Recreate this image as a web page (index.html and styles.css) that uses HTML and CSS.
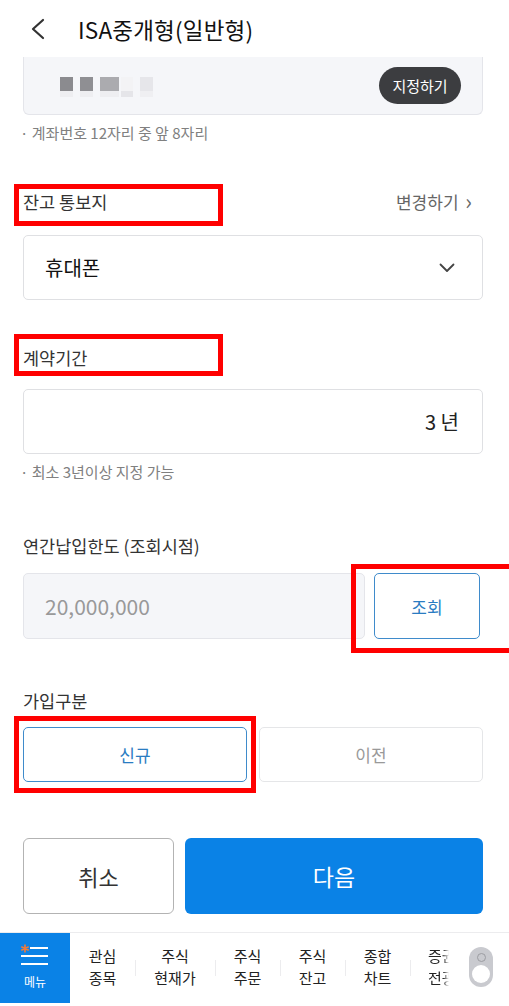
FILE: index.html
```html
<!DOCTYPE html>
<html>
<head>
<meta charset="utf-8">
<link rel="stylesheet" href="styles.css">
</head>
<body>

<div class="page">
  <div class="top-bar">
    <svg class="back-icon" width="16" height="22" viewBox="0 0 16 22">
      <path d="M13 2 L3 11 L13 20" fill="none" stroke="#333" stroke-width="2.2" stroke-linecap="round" stroke-linejoin="round"/>
    </svg>
    <div class="top-title">ISA중개형(일반형)</div>
  </div>

  <div class="account-box">
    <div class="account-blur">
      <span class="blur b1"></span>
      <span class="blur b2"></span>
      <span class="blur b3"></span>
      <span class="blur b4"></span>
      <span class="blur b5"></span>
    </div>
    <button class="pill-btn">지정하기</button>
  </div>
  <p class="note note-account">· 계좌번호 12자리 중 앞 8자리</p>

  <!-- 잔고 통보지 -->
  <div class="field-head head-notice">
    <span class="field-label">잔고 통보지</span>
    <span class="field-link">변경하기 <span class="link-arrow">&#8250;</span></span>
    <span class="mark mark-notice"></span>
  </div>
  <div class="input-box select-box">
    <span class="select-value">휴대폰</span>
    <svg width="16" height="10" viewBox="0 0 16 10">
      <path d="M1.5 1.5 L8 8 L14.5 1.5" fill="none" stroke="#444" stroke-width="1.8" stroke-linecap="round" stroke-linejoin="round"/>
    </svg>
  </div>

  <!-- 계약기간 -->
  <div class="field-head head-period">
    <span class="field-label">계약기간</span>
    <span class="mark mark-period"></span>
  </div>
  <div class="input-box period-box">
    <span class="period-value">3 년</span>
  </div>
  <p class="note note-period">· 최소 3년이상 지정 가능</p>

  <!-- 연간납입한도 -->
  <div class="field-head head-limit">
    <span class="field-label">연간납입한도 (조회시점)</span>
  </div>
  <div class="limit-row">
    <div class="limit-input">20,000,000</div>
    <button class="outline-btn query-btn">조회</button>
    <span class="mark mark-query"></span>
  </div>

  <!-- 가입구분 -->
  <div class="field-head head-type">
    <span class="field-label">가입구분</span>
  </div>
  <div class="type-row">
    <button class="outline-btn type-btn active">신규</button>
    <button class="type-btn">이전</button>
    <span class="mark mark-type"></span>
  </div>

  <div class="action-row">
    <button class="cancel-btn">취소</button>
    <button class="next-btn">다음</button>
  </div>

  <div class="bottom-nav">
    <div class="menu-tab">
      <svg width="28" height="24" viewBox="0 0 28 24">
        <path d="M4 1 L4 8 M0.8 3 L7.2 6 M0.8 6 L7.2 3" stroke="#f07a3a" stroke-width="1.6" stroke-linecap="round"/>
        <path d="M10 4 H26 M1 12 H26 M1 20 H26" stroke="#fff" stroke-width="2" stroke-linecap="square"/>
      </svg>
      <span class="menu-text">메뉴</span>
    </div>
    <div class="nav-scroll">
      <div class="nav-item"><span>관심</span><span>종목</span></div>
      <div class="nav-item wide"><span>주식</span><span>현재가</span></div>
      <div class="nav-item"><span>주식</span><span>주문</span></div>
      <div class="nav-item"><span>주식</span><span>잔고</span></div>
      <div class="nav-item"><span>종합</span><span>차트</span></div>
      <div class="nav-item last"><span>증권</span><span>전광판</span></div>
    </div>
    <div class="nav-toggle">
      <span class="toggle-ring"></span>
      <span class="toggle-dot"></span>
    </div>
  </div>
</div>

</body>
</html>
```

FILE: styles.css
```css
* {
  box-sizing: border-box;
}

body {
  margin: 0;
  background: #fff;
  font-family: "Noto Sans CJK KR", "Noto Sans", sans-serif;
  color: #222;
  overflow: hidden;
}

button {
  font-family: inherit;
  cursor: pointer;
}

.page {
  width: 509px;
  height: 1006px;
  overflow: hidden;
  display: flex;
  flex-direction: column;
}

/* top bar */
.top-bar {
  height: 57px;
  display: flex;
  align-items: center;
  padding-left: 30px;
  flex-shrink: 0;
}

.back-icon {
  margin-top: 1px;
}

.top-title {
  margin-left: 32px;
  font-size: 22.5px;
  color: #111;
  letter-spacing: 0.2px;
}

/* account */
.account-box {
  margin: 0 26px 0 23px;
  height: 58px;
  background: #f5f6f9;
  border: 1px solid #e4e5ea;
  border-top: none;
  border-radius: 0 0 6px 6px;
  display: flex;
  align-items: center;
  justify-content: space-between;
  padding: 0 21px 0 36px;
  flex-shrink: 0;
}

.account-blur {
  display: flex;
  gap: 7px;
  align-items: flex-start;
  margin-top: 2px;
}

.blur {
  display: block;
  height: 14px;
  border-bottom: 6px solid #eeeef1;
}

.b1 { width: 13px; height: 20px; background: #8b8b8f; }
.b2 { width: 13px; height: 20px; background: #8f8f93; }
.b3 { width: 19px; height: 20px; background: #ababaf; }
.b4 { width: 12px; height: 20px; background: #f3f3f5; margin-left: -5px; border-bottom-color: #e5e5e9; }
.b5 { width: 13px; height: 20px; background: #e6e6ea; border-bottom-color: #efeff2; }

.pill-btn {
  height: 37px;
  width: 82px;
  border: none;
  border-radius: 19px;
  background: #3c3d40;
  color: #fff;
  font-size: 15px;
  padding: 0;
}

.note {
  margin: 0;
  font-size: 15px;
  line-height: 18px;
  color: #808080;
  padding-left: 20px;
}

.note-account {
  margin-top: 9px;
}

/* field heads */
.field-head {
  position: relative;
  display: flex;
  justify-content: space-between;
  align-items: center;
  height: 24px;
  padding: 0 37px 0 23px;
  flex-shrink: 0;
}

.field-label {
  font-size: 17.5px;
  color: #333;
}

.field-link {
  font-size: 17px;
  color: #666;
}

.link-arrow {
  font-size: 22px;
  line-height: 1;
  margin-left: 3px;
  position: relative;
  top: 1px;
}

.head-notice { margin-top: 47px; }
.head-period { margin-top: 45px; }
.head-limit { margin-top: 52px; }
.head-type { margin-top: 49px; }

/* red annotation frames */
.mark {
  position: absolute;
  border: 5px solid #ff0000;
  pointer-events: none;
}

.mark-notice { top: -5px; left: 14px; width: 209px; height: 42px; }
.mark-period { top: -11px; left: 14px; width: 209px; height: 42px; }
.mark-query { top: -9px; left: 328px; width: 165px; height: 89px; }
.mark-type { top: -11px; left: -9px; width: 242px; height: 77px; }

/* inputs */
.input-box {
  margin: 0 26px 0 23px;
  height: 65px;
  border: 1px solid #dfe0e3;
  border-radius: 5px;
  display: flex;
  align-items: center;
  flex-shrink: 0;
}

.select-box {
  margin-top: 22px;
  justify-content: space-between;
  padding: 0 27px 0 21px;
}

.select-value {
  font-size: 20px;
  color: #111;
}

.period-box {
  margin-top: 20px;
  justify-content: flex-end;
  padding-right: 23px;
}

.period-value {
  font-size: 20px;
  color: #222;
}

.note-period {
  margin-top: 9px;
}

.limit-row {
  position: relative;
  display: flex;
  gap: 9px;
  margin: 16px 29px 0 23px;
  height: 66px;
  flex-shrink: 0;
}

.limit-input {
  flex: 1;
  background: #f5f6f9;
  border: 1px solid #e4e5ea;
  border-radius: 5px;
  display: flex;
  align-items: center;
  padding-left: 21px;
  font-size: 21px;
  color: #999;
}

.outline-btn {
  background: #fff;
  border: 1.5px solid #3f8bcb;
  border-radius: 5px;
  color: #2a7cc2;
  font-size: 17px;
}

.query-btn {
  width: 106px;
}

.type-row {
  position: relative;
  display: flex;
  gap: 12px;
  margin: 15px 26px 0 23px;
  height: 55px;
  flex-shrink: 0;
}

.type-btn {
  flex: 1;
  background: #fff;
  border: 1.5px solid #e5e6e8;
  border-radius: 5px;
  color: #999;
  font-size: 17px;
}

.type-btn.active {
  border-color: #3f8bcb;
  color: #2a7cc2;
}

/* actions */
.action-row {
  display: flex;
  gap: 11px;
  margin: 56px 26px 0 23px;
  height: 76px;
  flex-shrink: 0;
}

.cancel-btn {
  width: 151px;
  background: #fff;
  border: 1.5px solid #b3b3b3;
  border-radius: 6px;
  font-size: 22px;
  color: #333;
}

.next-btn {
  flex: 1;
  background: #0a82e6;
  border: none;
  border-radius: 6px;
  font-size: 23px;
  color: #fff;
}

/* bottom nav */
.bottom-nav {
  margin-top: 18px;
  border-top: 1px solid #ececee;
  height: 71px;
  display: flex;
  flex-shrink: 0;
}

.menu-tab {
  width: 70px;
  height: 70px;
  background: #0a82e6;
  display: flex;
  flex-direction: column;
  align-items: center;
  padding-top: 11px;
}

.menu-text {
  margin-top: 6px;
  font-size: 12px;
  color: #fff;
  line-height: 16px;
}

.nav-scroll {
  width: 385px;
  overflow: hidden;
  display: flex;
  height: 70px;
}

.nav-item {
  flex: 0 0 65px;
  display: flex;
  flex-direction: column;
  align-items: center;
  justify-content: center;
  font-size: 15px;
  line-height: 22px;
  color: #222;
  position: relative;
  padding-bottom: 2px;
}

.nav-item.wide {
  flex-basis: 80px;
}

.nav-item + .nav-item::before {
  content: "";
  position: absolute;
  left: 0;
  top: 27px;
  height: 16px;
  border-left: 1px solid #ececee;
}

.nav-item.last {
  align-items: flex-start;
  padding-left: 18px;
  -webkit-mask-image: linear-gradient(to right, #000 51%, transparent 60%);
  mask-image: linear-gradient(to right, #000 51%, transparent 60%);
}

.nav-toggle {
  margin: 14px 0 0 14px;
  width: 24px;
  height: 40px;
  border-radius: 12px;
  background: #c9cacf;
  display: flex;
  flex-direction: column;
  align-items: center;
  padding-top: 6px;
}

.toggle-ring {
  width: 9px;
  height: 9px;
  border-radius: 50%;
  border: 1px solid #9c9da2;
}

.toggle-dot {
  margin-top: 3px;
  width: 18px;
  height: 18px;
  border-radius: 50%;
  background: #fff;
}
```
